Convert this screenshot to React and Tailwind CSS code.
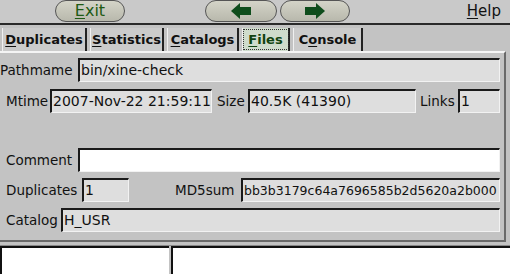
const font = { fontFamily: '"DejaVu Sans", sans-serif' };

function Field({ value = "", white, className = "", textClass = "text-[14px]" }) {
  return (
    <div
      className={`h-[24px] border-t-2 border-l-2 border-t-[#1a1a1a] border-l-[#1a1a1a] border-b border-r border-b-[#f2f2f2] border-r-[#f2f2f2] px-[1px] leading-[21px] text-[#111] whitespace-nowrap overflow-hidden ${textClass} ${
        white ? "bg-white" : "bg-[#dedede]"
      } ${className}`}
    >
      {value}
    </div>
  );
}

function Pill({ children, className = "" }) {
  return (
    <div
      className={`h-[22px] rounded-full border border-[#555] bg-gradient-to-b from-[#d4d4c8] to-[#b8b8ac] flex items-center justify-center ${className}`}
    >
      {children}
    </div>
  );
}

function Arrow({ dir }) {
  return (
    <svg width="22" height="16" viewBox="0 0 22 16">
      {dir === "left" ? (
        <path d="M1 8 L10 0 L10 4 L21 4 L21 12 L10 12 L10 16 Z" fill="#0f4d1c" />
      ) : (
        <path d="M21 8 L12 0 L12 4 L1 4 L1 12 L12 12 L12 16 Z" fill="#0f4d1c" />
      )}
    </svg>
  );
}

function Tab({ children, active, className = "" }) {
  return (
    <div
      className={`h-[23px] flex items-center justify-center text-[13px] font-bold border-r-2 border-r-[#222] border-l border-l-[#f0f0f0] ${
        active ? "bg-[#cfdccc] outline-1 outline-dotted outline-[#333] -outline-offset-2 text-[#114411]" : "bg-[#cbcbcb] text-[#111]"
      } ${className}`}
    >
      {children}
    </div>
  );
}

export default function App() {
  return (
    <div className="w-[510px] h-[274px] bg-[#c3c3c3] flex flex-col overflow-hidden" style={font}>
      <div className="h-[25px] flex items-center bg-[#c9c9c9] border-b-2 border-b-[#2a2a2a]">
        <Pill className="ml-[55px] w-[70px]">
          <span className="text-[16px] text-[#1f5a14]">
            <span className="underline underline-offset-2">E</span>xit
          </span>
        </Pill>
        <Pill className="ml-[80px] w-[72px]">
          <Arrow dir="left" />
        </Pill>
        <Pill className="ml-[3px] w-[70px]">
          <Arrow dir="right" />
        </Pill>
        <div className="ml-auto mr-[9px] text-[15px] text-[#111]">
          <span className="underline underline-offset-2">H</span>elp
        </div>
      </div>

      <div className="flex items-end gap-[3px] pl-[2px] pt-[2px] h-[26px]">
        <Tab className="w-[85px]"><span><span className="underline underline-offset-2">D</span>uplicates</span></Tab>
        <Tab className="w-[74px]"><span><span className="underline underline-offset-2">S</span>tatistics</span></Tab>
        <Tab className="w-[72px]"><span><span className="underline underline-offset-2">C</span>atalogs</span></Tab>
        <Tab active className="w-[48px]"><span><span className="underline underline-offset-2">F</span>iles</span></Tab>
        <Tab className="w-[70px]"><span>C<span className="underline underline-offset-2">o</span>nsole</span></Tab>
      </div>

      <div className="h-[192px] border-t-2 border-t-[#f4f4f4] border-r-2 border-r-[#6a6a6a] border-b-2 border-b-[#6a6a6a] mr-[4px] text-[13.5px] text-[#111] flex flex-col pt-[5px] pr-[4px]">
        <div className="flex items-center">
          <span className="w-[78px]">Pathmame</span>
          <Field value="bin/xine-check" className="flex-1" />
        </div>
        <div className="flex items-center mt-[7px] pl-[6px]">
          <span className="w-[44px]">Mtime</span>
          <Field value="2007-Nov-22 21:59:11" className="w-[162px]" />
          <span className="ml-[5px] w-[31px]">Size</span>
          <Field value="40.5K (41390)" className="w-[168px]" />
          <span className="ml-[4px] w-[38px]">Links</span>
          <Field value="1" className="flex-1" />
        </div>
        <div className="flex items-center mt-[35px] pl-[6px]">
          <span className="w-[72px]">Comment</span>
          <Field white className="flex-1" />
        </div>
        <div className="flex items-center mt-[6px] pl-[6px]">
          <span className="w-[76px]">Duplicates</span>
          <Field value="1" className="w-[47px]" />
          <span className="ml-[46px] w-[66px]">MD5sum</span>
          <Field value="bb3b3179c64a7696585b2d5620a2b000" className="flex-1" textClass="text-[12.5px]" />
        </div>
        <div className="flex items-center mt-[6px] pl-[6px]">
          <span className="w-[55px]">Catalog</span>
          <Field value="H_USR" className="flex-1" />
        </div>
      </div>

      <div className="flex mt-[3px] gap-[2px] h-[29px] border-t border-t-[#888]">
        <div className="w-[169px] bg-white border-t-2 border-l-2 border-t-[#111] border-l-[#111]" />
        <div className="flex-1 bg-white border-t-2 border-l-2 border-t-[#111] border-l-[#111]" />
      </div>
    </div>
  );
}
